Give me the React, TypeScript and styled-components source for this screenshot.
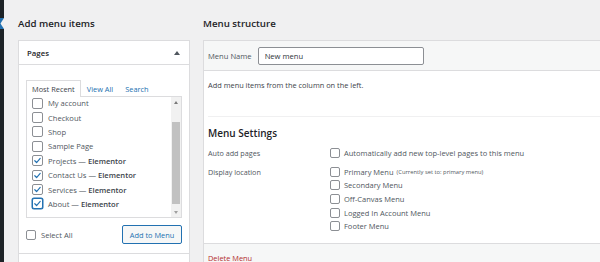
import styled, { createGlobalStyle, css } from 'styled-components';

const GlobalStyle = createGlobalStyle`
  html, body {
    margin: 0;
    padding: 0;
    background: #f0f0f1;
    overflow: hidden;
  }
  body {
    font-family: "Open Sans", "Noto Sans", sans-serif;
    color: #3c434a;
  }
  * {
    box-sizing: border-box;
  }
`;

const pages = [
  { title: 'My account', checked: false },
  { title: 'Checkout', checked: false },
  { title: 'Shop', checked: false },
  { title: 'Sample Page', checked: false },
  { title: 'Projects', builder: 'Elementor', checked: true },
  { title: 'Contact Us', builder: 'Elementor', checked: true },
  { title: 'Services', builder: 'Elementor', checked: true },
  { title: 'About', builder: 'Elementor', checked: true, focused: true },
];

const locations = [
  { name: 'Primary Menu', note: '(Currently set to: primary menu)' },
  { name: 'Secondary Menu' },
  { name: 'Off-Canvas Menu' },
  { name: 'Logged In Account Menu' },
  { name: 'Footer Menu' },
];

const CheckMark = () => (
  <svg width="9" height="9" viewBox="0 0 20 20">
    <path d="M4 10.5l4 4 8-9" fill="none" stroke="#2271b1" strokeWidth="2.6" strokeLinecap="round" strokeLinejoin="round" />
  </svg>
);

const App = () => {
  return (
    <>
      <GlobalStyle />
      <Screen>
        <AdminBar>
          <BarDark $height={18} />
          <BarCurrent>
            <svg width="4" height="11" viewBox="0 0 4 11">
              <polygon points="4,0 0.5,5.5 4,11" fill="#f0f0f1" />
            </svg>
          </BarCurrent>
          <BarDark $height={240} />
        </AdminBar>

        <Main>
          <LeftColumn>
            <Heading>Add menu items</Heading>
            <Panel>
              <SectionTitle>
                Pages
                <svg width="6" height="4" viewBox="0 0 6 4">
                  <polygon points="0,4 3,0 6,4" fill="#50575e" />
                </svg>
              </SectionTitle>
              <SectionBody>
                <Tabs>
                  <Tab $active>Most Recent</Tab>
                  <Tab>View All</Tab>
                  <Tab>Search</Tab>
                </Tabs>
                <ListBox>
                  <ListItems>
                    {pages.map((p) => (
                      <ListItem key={p.title}>
                        <Check $checked={p.checked} $focused={p.focused}>
                          {p.checked && <CheckMark />}
                        </Check>
                        <span>
                          {p.title}
                          {p.builder && (
                            <>
                              {' — '}
                              <Strong>{p.builder}</Strong>
                            </>
                          )}
                        </span>
                      </ListItem>
                    ))}
                  </ListItems>
                  <Scrollbar>
                    <ScrollArrow>
                      <svg width="4" height="3" viewBox="0 0 4 3">
                        <polygon points="0,3 2,0 4,3" fill="#7a7a7a" />
                      </svg>
                    </ScrollArrow>
                    <ScrollTrack>
                      <ScrollThumb />
                    </ScrollTrack>
                    <ScrollArrow>
                      <svg width="4" height="3" viewBox="0 0 4 3">
                        <polygon points="0,0 4,0 2,3" fill="#a0a0a0" />
                      </svg>
                    </ScrollArrow>
                  </Scrollbar>
                </ListBox>
                <ActionsRow>
                  <SelectAll>
                    <Check $size={10} />
                    Select All
                  </SelectAll>
                  <SecondaryButton>Add to Menu</SecondaryButton>
                </ActionsRow>
              </SectionBody>
              <SectionTitle />
            </Panel>
          </LeftColumn>

          <RightColumn>
            <Heading>Menu structure</Heading>
            <Panel>
              <MenuHeader>
                <FieldLabel>Menu Name</FieldLabel>
                <NameInput defaultValue="New menu" />
              </MenuHeader>
              <MenuBody>
                <Hint>Add menu items from the column on the left.</Hint>
                <Divider />
                <SubHeading>Menu Settings</SubHeading>
                <SettingsGrid>
                  <SettingLabel>Auto add pages</SettingLabel>
                  <OptionList>
                    <Option>
                      <Check $size={10} />
                      Automatically add new top-level pages to this menu
                    </Option>
                  </OptionList>
                  <SettingLabel>Display location</SettingLabel>
                  <OptionList>
                    {locations.map((l) => (
                      <Option key={l.name}>
                        <Check $size={10} />
                        {l.name}
                        {l.note && <Note>{l.note}</Note>}
                      </Option>
                    ))}
                  </OptionList>
                </SettingsGrid>
              </MenuBody>
              <MenuFooter>Delete Menu</MenuFooter>
            </Panel>
          </RightColumn>
        </Main>
      </Screen>
    </>
  );
};

const Screen = styled.div`
  display: flex;
  width: 600px;
  height: 262px;
  overflow: hidden;
`;

const AdminBar = styled.div`
  width: 4px;
  flex-shrink: 0;
  display: flex;
  flex-direction: column;
`;

const BarDark = styled.div<{ $height: number }>`
  height: ${(p) => p.$height}px;
  background: #1d2327;
`;

const BarCurrent = styled.div`
  height: 11px;
  background: #2271b1;
  display: flex;

  svg {
    display: block;
  }
`;

const Main = styled.div`
  flex: 1;
  display: flex;
  gap: 13px;
  padding-left: 14px;
  min-width: 0;
`;

const LeftColumn = styled.div`
  width: 172px;
  flex-shrink: 0;
`;

const RightColumn = styled.div`
  width: 420px;
  flex-shrink: 0;
`;

const Heading = styled.h2`
  margin: 0;
  height: 40px;
  padding-top: 15px;
  font-size: 9.7px;
  line-height: 18px;
  font-weight: 600;
  color: #1d2327;
`;

const Panel = styled.div`
  background: #fff;
  border: 1px solid #dcdcde;
`;

const SectionTitle = styled.div`
  height: 24px;
  padding: 0 8px;
  display: flex;
  align-items: center;
  justify-content: space-between;
  font-size: 7.8px;
  font-weight: 600;
  color: #1d2327;
  border-bottom: 1px solid #dcdcde;

  svg {
    margin-right: 1px;
  }
`;

const SectionBody = styled.div`
  padding: 15px 7px 9px 7px;
  border-bottom: 1px solid #dcdcde;
`;

const Tabs = styled.div`
  display: flex;
  height: 16px;
`;

const Tab = styled.div<{ $active?: boolean }>`
  padding: 0 5px;
  display: flex;
  align-items: center;
  font-size: 7.4px;
  color: #2271b1;
  border: 1px solid transparent;
  border-bottom: none;

  ${(p) =>
    p.$active &&
    css`
      color: #3c434a;
      background: #fff;
      border-color: #dcdcde;
      margin-bottom: -1px;
      position: relative;
      z-index: 1;
    `}
`;

const ListBox = styled.div`
  height: 122px;
  border: 1px solid #dcdcde;
  display: flex;
  overflow: hidden;
`;

const ListItems = styled.div`
  flex: 1;
  padding: 0 0 0 5px;
  margin-top: -1px;
`;

const ListItem = styled.div`
  height: 14.4px;
  display: flex;
  align-items: center;
  gap: 5px;
  font-size: 7.6px;
  color: #50575e;
  white-space: nowrap;
`;

const Strong = styled.span`
  font-weight: 600;
  color: #3c434a;
`;

const Check = styled.span<{ $checked?: boolean; $focused?: boolean; $size?: number }>`
  width: ${(p) => p.$size ?? 11}px;
  height: ${(p) => p.$size ?? 11}px;
  flex-shrink: 0;
  border: 1px solid #8c8f94;
  border-radius: 2px;
  background: #fff;
  display: inline-flex;
  align-items: center;
  justify-content: center;

  ${(p) =>
    p.$focused &&
    css`
      border-color: #2271b1;
      box-shadow: 0 0 0 0.5px #2271b1;
    `}
`;

const Scrollbar = styled.div`
  width: 10px;
  background: #f1f1f1;
  display: flex;
  flex-direction: column;
`;

const ScrollArrow = styled.div`
  height: 10px;
  display: flex;
  align-items: center;
  justify-content: center;
`;

const ScrollTrack = styled.div`
  flex: 1;
  padding: 15px 1px 3px;
  display: flex;
`;

const ScrollThumb = styled.div`
  flex: 1;
  background: #c1c1c1;
`;

const ActionsRow = styled.div`
  margin-top: 7px;
  height: 19px;
  display: flex;
  align-items: center;
  justify-content: space-between;
`;

const SelectAll = styled.label`
  display: flex;
  align-items: center;
  gap: 5px;
  font-size: 7.6px;
  color: #50575e;
`;

const SecondaryButton = styled.button`
  width: 60px;
  height: 19px;
  padding: 0;
  font-family: inherit;
  font-size: 7.4px;
  color: #2271b1;
  background: #f6f7f7;
  border: 1px solid #2271b1;
  border-radius: 2px;
`;

const MenuHeader = styled.div`
  height: 30px;
  padding: 0 4px;
  display: flex;
  align-items: center;
  gap: 6px;
  background: #f6f7f7;
  border-bottom: 1px solid #dcdcde;
`;

const FieldLabel = styled.span`
  font-size: 7.6px;
  color: #50575e;
`;

const NameInput = styled.input`
  width: 166px;
  height: 18px;
  padding: 0 6px;
  font-family: inherit;
  font-size: 7.6px;
  color: #2c3338;
  background: #fff;
  border: 1px solid #8c8f94;
  border-radius: 2px;
  outline: none;
`;

const MenuBody = styled.div`
  padding: 9px 4px 10px 4px;
`;

const Hint = styled.p`
  margin: 0;
  font-size: 7.4px;
  line-height: 10px;
  color: #3c434a;
`;

const Divider = styled.hr`
  margin: 26px 0 0;
  border: none;
  border-top: 1px solid #f0f0f1;
`;

const SubHeading = styled.h3`
  margin: 9px 0 0;
  font-size: 10px;
  line-height: 14px;
  font-weight: 600;
  color: #1d2327;
`;

const SettingsGrid = styled.div`
  margin-top: 6px;
  display: grid;
  grid-template-columns: 122px 1fr;
  row-gap: 5px;
`;

const SettingLabel = styled.div`
  height: 13.7px;
  display: flex;
  align-items: center;
  font-size: 7.2px;
  color: #50575e;
`;

const OptionList = styled.div`
  display: flex;
  flex-direction: column;
`;

const Option = styled.label`
  height: 13.7px;
  display: flex;
  align-items: center;
  gap: 4px;
  font-size: 7.5px;
  color: #50575e;
  white-space: nowrap;
`;

const Note = styled.span`
  font-size: 5.8px;
  margin-left: -1px;
`;

const MenuFooter = styled.div`
  height: 40px;
  padding: 9px 4px;
  font-size: 7.4px;
  line-height: 10px;
  color: #b32d2e;
  background: #f6f7f7;
  border-top: 1px solid #dcdcde;
`;

export default App;
